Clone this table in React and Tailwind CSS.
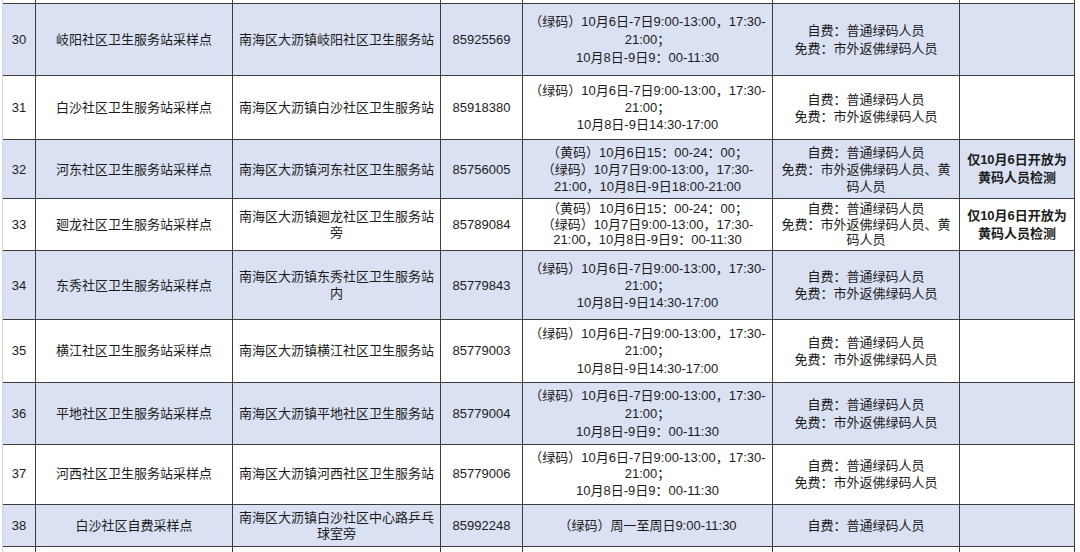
import React from 'react'

const rows = [
  {
    no: '30',
    name: '岐阳社区卫生服务站采样点',
    addr: ['南海区大沥镇岐阳社区卫生服务站'],
    phone: '85925569',
    time: ['（绿码）10月6日-7日9:00-13:00，17:30-', '21:00；', '10月8日-9日9：00-11:30'],
    fee: ['自费：普通绿码人员', '免费：市外返佛绿码人员'],
    note: [],
    h: 'h-[72px]',
    lead: 'leading-[18px]',
    blue: true,
  },
  {
    no: '31',
    name: '白沙社区卫生服务站采样点',
    addr: ['南海区大沥镇白沙社区卫生服务站'],
    phone: '85918380',
    time: ['（绿码）10月6日-7日9:00-13:00，17:30-', '21:00；', '10月8日-9日14:30-17:00'],
    fee: ['自费：普通绿码人员', '免费：市外返佛绿码人员'],
    note: [],
    h: 'h-[64px]',
    lead: 'leading-[17px]',
    blue: false,
  },
  {
    no: '32',
    name: '河东社区卫生服务站采样点',
    addr: ['南海区大沥镇河东社区卫生服务站'],
    phone: '85756005',
    time: ['（黄码）10月6日15：00-24：00；', '（绿码）10月7日9:00-13:00，17:30-', '21:00，10月8日-9日18:00-21:00'],
    fee: ['自费：普通绿码人员', '免费：市外返佛绿码人员、黄', '码人员'],
    note: ['仅10月6日开放为', '黄码人员检测'],
    h: 'h-[59px]',
    lead: 'leading-[17px]',
    blue: true,
  },
  {
    no: '33',
    name: '廻龙社区卫生服务站采样点',
    addr: ['南海区大沥镇廻龙社区卫生服务站', '旁'],
    phone: '85789084',
    time: ['（黄码）10月6日15：00-24：00；', '（绿码）10月7日9:00-13:00，17:30-', '21:00，10月8日-9日9：00-11:30'],
    fee: ['自费：普通绿码人员', '免费：市外返佛绿码人员、黄', '码人员'],
    note: ['仅10月6日开放为', '黄码人员检测'],
    h: 'h-[52px]',
    lead: 'leading-[15.5px]',
    blue: false,
  },
  {
    no: '34',
    name: '东秀社区卫生服务站采样点',
    addr: ['南海区大沥镇东秀社区卫生服务站', '内'],
    phone: '85779843',
    time: ['（绿码）10月6日-7日9:00-13:00，17:30-', '21:00；', '10月8日-9日14:30-17:00'],
    fee: ['自费：普通绿码人员', '免费：市外返佛绿码人员'],
    note: [],
    h: 'h-[69px]',
    lead: 'leading-[17px]',
    blue: true,
  },
  {
    no: '35',
    name: '横江社区卫生服务站采样点',
    addr: ['南海区大沥镇横江社区卫生服务站'],
    phone: '85779003',
    time: ['（绿码）10月6日-7日9:00-13:00，17:30-', '21:00；', '10月8日-9日14:30-17:00'],
    fee: ['自费：普通绿码人员', '免费：市外返佛绿码人员'],
    note: [],
    h: 'h-[63px]',
    lead: 'leading-[17.5px]',
    blue: false,
  },
  {
    no: '36',
    name: '平地社区卫生服务站采样点',
    addr: ['南海区大沥镇平地社区卫生服务站'],
    phone: '85779004',
    time: ['（绿码）10月6日-7日9:00-13:00，17:30-', '21:00；', '10月8日-9日9：00-11:30'],
    fee: ['自费：普通绿码人员', '免费：市外返佛绿码人员'],
    note: [],
    h: 'h-[62px]',
    lead: 'leading-[18px]',
    blue: true,
  },
  {
    no: '37',
    name: '河西社区卫生服务站采样点',
    addr: ['南海区大沥镇河西社区卫生服务站'],
    phone: '85779006',
    time: ['（绿码）10月6日-7日9:00-13:00，17:30-', '21:00；', '10月8日-9日9：00-11:30'],
    fee: ['自费：普通绿码人员', '免费：市外返佛绿码人员'],
    note: [],
    h: 'h-[60px]',
    lead: 'leading-[16.5px]',
    blue: false,
  },
  {
    no: '38',
    name: '白沙社区自费采样点',
    addr: ['南海区大沥镇白沙社区中心路乒乓', '球室旁'],
    phone: '85992248',
    time: ['（绿码）周一至周日9:00-11:30'],
    fee: ['自费：普通绿码人员'],
    note: [],
    h: 'h-[42px]',
    lead: 'leading-[16px]',
    blue: true,
  },
]

const cols = 'grid grid-cols-[33px_197px_208px_82px_250px_187px_115px]'

const Lines = ({ items }) => (
  <div>
    {items.map((t, i) => (
      <div key={i} className="whitespace-nowrap">
        {t}
      </div>
    ))}
  </div>
)

const Cell = ({ children, last, className = '' }) => (
  <div
    className={`flex items-center justify-center text-center ${
      last ? 'border-r border-[#3d3d3d]' : 'border-r border-[#3d3d3d]'
    } ${className}`}
  >
    {children}
  </div>
)

const EmptyRow = ({ h }) => (
  <div className={`${cols} ${h} bg-white`}>
    {Array.from({ length: 7 }).map((_, i) => (
      <div key={i} className="border-r border-[#3d3d3d]" />
    ))}
  </div>
)

export default function App() {
  return (
    <div className="w-[1080px] h-[552px] overflow-hidden bg-white text-[13px] text-[#1c1c1c] font-['Liberation_Sans','Noto_Sans_CJK_SC',sans-serif]">
      <div className="ml-[2px] w-[1073px] border-l border-[#d4d4d4]">
        {/* tail of the previous row */}
        <div className="border-b border-[#3d3d3d]">
          <EmptyRow h="h-[3px]" />
        </div>

        {rows.map((r) => (
          <div
            key={r.no}
            className={`${cols} ${r.h} ${r.lead} border-b border-[#3d3d3d] ${
              r.blue ? 'bg-[#d9e1f2]' : 'bg-white'
            }`}
          >
            <Cell>{r.no}</Cell>
            <Cell>{r.name}</Cell>
            <Cell>
              <Lines items={r.addr} />
            </Cell>
            <Cell>{r.phone}</Cell>
            <Cell>
              <Lines items={r.time} />
            </Cell>
            <Cell>
              <Lines items={r.fee} />
            </Cell>
            <Cell className="font-bold leading-[18px]">
              <Lines items={r.note} />
            </Cell>
          </div>
        ))}

        {/* start of the next row */}
        <EmptyRow h="h-[10px]" />
      </div>
    </div>
  )
}
